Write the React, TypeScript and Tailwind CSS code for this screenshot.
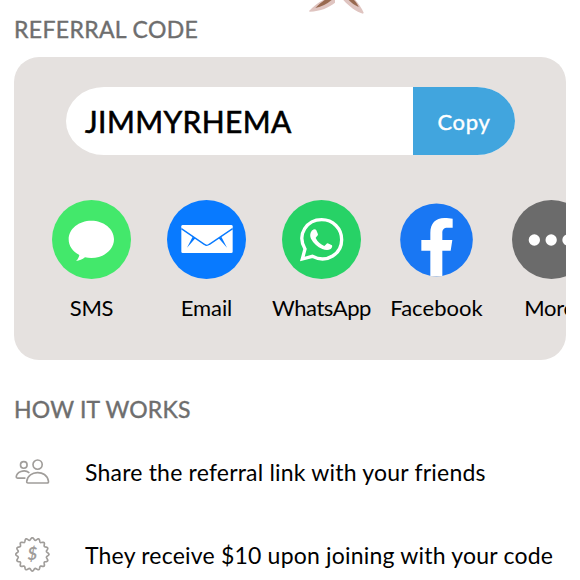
import type { ReactNode } from "react";

const sealPoints = Array.from({ length: 145 }, (_, i) => {
  const angle = (i / 144) * Math.PI * 2;
  const radius = 46.5 + 3.5 * Math.cos(angle * 16);
  return `${(52 + radius * Math.sin(angle)).toFixed(1)},${(52 - radius * Math.cos(angle)).toFixed(1)}`;
}).join(" ");

function ShareItem({ label, spacing, children }: { label: string; spacing: string; children: ReactNode }) {
  return (
    <button className="flex w-[115px] shrink-0 flex-col items-center">
      <svg viewBox="0 0 237 237" className="size-[79px]">{children}</svg>
      <span className={`mt-[14px] text-[22px] leading-[30px] whitespace-nowrap ${spacing}`}>{label}</span>
    </button>
  );
}

function Step({ icon, children }: { icon: ReactNode; children: ReactNode }) {
  return (
    <li className="flex h-[83px] items-center">
      <div className="flex w-[70px] shrink-0 items-center">{icon}</div>
      {children}
    </li>
  );
}

export default function App() {
  return (
    <main className="h-[580px] w-[580px] overflow-hidden bg-white pl-[15px] font-[Lato,sans-serif] text-black">
      {/* Illustration tips */}
      <svg viewBox="0 0 165 42" className="ml-[294px] h-[14px] w-[55px]">
        <path d="M0 33 C15 18 28 7 43 0 H78 V8 C60 22 35 34 2 35 Z" fill="#dfc4c0" />
        <path d="M19 24 C31 12 40 5 47 0 H68 C54 12 38 20 19 24 Z" fill="#98694f" />
        <path d="M103 0 H139 C149 12 159 26 164 38 L162 41 C139 34 119 18 103 0 Z" fill="#dfc4c0" />
        <path d="M119 0 H135 C143 9 147 16 149 21 C137 16 127 9 119 0 Z" fill="#98694f" />
      </svg>

      <h2 className="-ml-px h-[30px] text-[23px] leading-[30px] tracking-[0.35px] text-[#6e6e6e] [-webkit-text-stroke:0.4px_#6e6e6e]">
        REFERRAL CODE
      </h2>

      {/* Referral card */}
      <section className="mt-[13px] -ml-px h-[303px] w-[552px] overflow-hidden rounded-[25px] bg-[#e5e1df] pt-[30px]">
        <div className="ml-[52px] flex h-[68px] w-[449px] overflow-hidden rounded-[38px/34px] bg-white">
          <div className="flex flex-1 items-center pl-[19px] text-[30px] tracking-[0.4px] [-webkit-text-stroke:0.6px_black]">
            JIMMYRHEMA
          </div>
          <button className="w-[102px] bg-[#41a5de] text-[22px] tracking-[0.7px] text-white [-webkit-text-stroke:0.4px_white]">Copy</button>
        </div>

        <div className="mt-[45px] ml-5 flex">
          <ShareItem label="SMS" spacing="tracking-[-0.3px]">
            <circle cx="118.5" cy="118.5" r="118.5" fill="#43e86b" />
            <path d="M118 62 C155 62 186 86 186 118 S155 174 118 174 C111 174 105 173 99 172 C91 179 82 182 72 183 C78 178 81 171 82 165 C62 155 50 138 50 118 C50 86 81 62 118 62Z" fill="white" />
          </ShareItem>
          <ShareItem label="Email" spacing="tracking-[-0.1px]">
            <circle cx="118.5" cy="118.5" r="118.5" fill="#087aff" />
            <rect x="43" y="75" width="154" height="84" rx="4" fill="white" />
            <path d="M43 86 L112 133 Q119 139 127 133 L197 86" fill="none" stroke="#087aff" strokeWidth="4" />
            <path d="M77 110 L85 115 L60 143Z M163 110 L155 115 L180 143Z" fill="#087aff" />
          </ShareItem>
          <ShareItem label="WhatsApp" spacing="tracking-[-0.45px]">
            <circle cx="118.5" cy="118.5" r="118.5" fill="#27d266" />
            <path d="M61 177 L69 147 C43 102 76 59 119 59 C153 59 179 86 179 119 C179 160 136 192 91 169 Z" fill="none" stroke="white" strokeWidth="10" strokeLinejoin="miter" />
            <path d="M91 91 C95 87 101 87 103 91 L108 103 C109 107 101 112 101 114 C107 126 115 133 127 138 C130 137 134 130 137 130 L150 136 C152 139 149 145 146 147 C138 152 129 150 121 147 C106 141 94 129 87 116 C82 106 86 95 91 91Z" fill="white" />
          </ShareItem>
          <ShareItem label="Facebook" spacing="tracking-[0.05px]">
            <circle cx="118.5" cy="119.5" r="109" fill="#1977f3" />
            <path d="M100 228 V152 H73 V120 H100 V99 C100 70 116 54 142 54 C152 54 160 55 167 56 V83 H152 C140 83 136 89 136 99 V120 H166 L161 152 H136 V228Z" fill="white" />
          </ShareItem>
          <ShareItem label="More" spacing="tracking-[-0.3px] pr-1">
            <circle cx="118.5" cy="118.5" r="118.5" fill="#6b6b6b" />
            <circle cx="67" cy="120" r="17" fill="white" />
            <circle cx="117.5" cy="120" r="17" fill="white" />
            <circle cx="168" cy="120" r="17" fill="white" />
          </ShareItem>
        </div>
      </section>

      <h2 className="mt-[34px] -ml-px h-[30px] text-[23px] leading-[30px] tracking-[0.2px] text-[#6e6e6e] [-webkit-text-stroke:0.4px_#6e6e6e]">
        HOW IT WORKS
      </h2>

      <ul className="mt-[6px] text-[23px] tracking-[0.2px] whitespace-nowrap">
        <Step
          icon={
            <svg viewBox="0 0 105 76" className="h-[25px] w-[35px]" fill="none" stroke="#a09d9a" strokeWidth="5">
              <ellipse cx="26" cy="18" rx="10" ry="10" />
              <ellipse cx="68" cy="17" rx="14" ry="14" />
              <path d="M43 42 C27 29 4 40 3 55 Q3 58 7 58 H31" />
              <path d="M39 73 Q34 73 35 68 C39 34 95 31 101 67 Q102 73 97 73Z" />
            </svg>
          }
        >
          <span className="pt-px">Share the referral link with your friends</span>
        </Step>
        <Step
          icon={
            <svg viewBox="0 0 105 105" className="size-[35px]">
              <polygon points={sealPoints} fill="none" stroke="#a09d9a" strokeWidth="5" />
              <text x="52" y="69" textAnchor="middle" fontSize="50" fontWeight="700" fontStyle="italic" fill="#a09d9a">$</text>
            </svg>
          }
        >
          <span className="pt-px">They receive $10 upon joining with your code</span>
        </Step>
      </ul>
    </main>
  );
}
